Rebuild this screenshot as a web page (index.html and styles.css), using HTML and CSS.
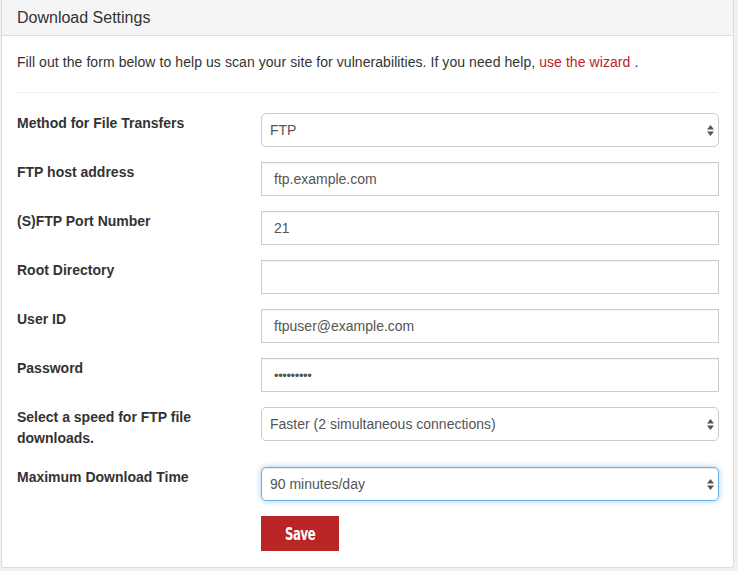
FILE: index.html
```html
<!DOCTYPE html>
<html>
<head>
<meta charset="utf-8">
<link rel="stylesheet" href="styles.css">
</head>
<body>
<div class="page">
  <div class="panel">
    <div class="panel-heading">Download Settings</div>
    <div class="panel-body">
      <p class="intro">Fill out the form below to help us scan your site for vulnerabilities. If you need help, <a href="#" class="link">use the wizard</a> .</p>
      <hr class="divider">
      <form class="form">
        <div class="row">
          <label class="label">Method for File Transfers</label>
          <div class="select-wrap">
            <select class="control select"><option>FTP</option></select>
            <svg class="arrows" width="7" height="11" viewBox="0 0 7 11"><path d="M3.5 0 L7 4.5 H0 Z M3.5 11 L7 6.5 H0 Z" fill="#555"/></svg>
          </div>
        </div>
        <div class="row">
          <label class="label">FTP host address</label>
          <input class="control input" type="text" value="ftp.example.com">
        </div>
        <div class="row">
          <label class="label">(S)FTP Port Number</label>
          <input class="control input" type="text" value="21">
        </div>
        <div class="row">
          <label class="label">Root Directory</label>
          <input class="control input" type="text" value="">
        </div>
        <div class="row">
          <label class="label">User ID</label>
          <input class="control input" type="text" value="ftpuser@example.com">
        </div>
        <div class="row">
          <label class="label">Password</label>
          <input class="control input password" type="password" value="password1">
        </div>
        <div class="row">
          <label class="label">Select a speed for FTP file downloads.</label>
          <div class="select-wrap">
            <select class="control select"><option>Faster (2 simultaneous connections)</option></select>
            <svg class="arrows" width="7" height="11" viewBox="0 0 7 11"><path d="M3.5 0 L7 4.5 H0 Z M3.5 11 L7 6.5 H0 Z" fill="#555"/></svg>
          </div>
        </div>
        <div class="row">
          <label class="label">Maximum Download Time</label>
          <div class="select-wrap">
            <select class="control select focused"><option>90 minutes/day</option></select>
            <svg class="arrows" width="7" height="11" viewBox="0 0 7 11"><path d="M3.5 0 L7 4.5 H0 Z M3.5 11 L7 6.5 H0 Z" fill="#555"/></svg>
          </div>
        </div>
        <div class="row last">
          <span></span>
          <div><button type="button" class="btn"><span class="btn-text">Save</span></button></div>
        </div>
      </form>
    </div>
  </div>
</div>
</body>
</html>
```

FILE: styles.css
```css
html, body {
  margin: 0;
  padding: 0;
  background: #f1f1f1;
  font-family: "Liberation Sans", Arial, Helvetica, sans-serif;
  color: #333;
}
.page {
  padding-left: 1px;
  width: 733px;
}
.panel {
  background: #fff;
  border: 1px solid #ddd;
  border-top: none;
  border-radius: 0 0 3px 3px;
}
.panel-heading {
  background: #f5f5f5;
  border-bottom: 1px solid #ddd;
  height: 36px;
  box-sizing: border-box;
  padding: 8px 15px 0;
  font-size: 16px;
  line-height: 20px;
  color: #333;
}
.panel-body {
  padding: 16px 14px 16px 15px;
}
.intro {
  margin: 0;
  font-size: 14px;
  line-height: 20px;
  letter-spacing: 0.07px;
}
.link {
  color: #b9232a;
  text-decoration: none;
}
.divider {
  border: 0;
  border-top: 1px solid #eee;
  margin: 20px 1px 20px 0;
}
.form {
  display: flex;
  flex-direction: column;
  gap: 15px;
}
.row {
  display: grid;
  grid-template-columns: 244px 1fr;
  align-items: start;
}
.label {
  font-weight: bold;
  font-size: 14px;
  line-height: 21px;
  padding-bottom: 3px;
  padding-right: 10px;
  color: #333;
}
.control {
  display: block;
  width: 100%;
  height: 34px;
  box-sizing: border-box;
  font-family: "Liberation Sans", Arial, Helvetica, sans-serif;
  font-size: 14px;
  color: #555;
  background: #fff;
  margin: 0;
  outline: none;
}
.input {
  border: 1px solid #ccc;
  border-radius: 0;
  padding: 6px 12px;
  box-shadow: inset 0 1px 1px rgba(0,0,0,0.04);
}
.password {
  font-size: 13px;
  letter-spacing: -0.4px;
}
.select-wrap {
  position: relative;
}
.select {
  -webkit-appearance: none;
  appearance: none;
  border: 1px solid #ccc;
  border-radius: 5px;
  padding: 6px 8px;
}
.select.focused {
  border-color: #66afe9;
  box-shadow: inset 0 1px 1px rgba(0,0,0,0.075), 0 0 6px rgba(102,175,233,0.6);
}
.arrows {
  position: absolute;
  right: 5px;
  top: 12px;
  pointer-events: none;
}
.btn {
  width: 78px;
  height: 35px;
  border: none;
  border-radius: 0;
  background: #ba2525;
  color: #fff;
  padding: 0;
  margin: 0;
  cursor: pointer;
}
.btn-text {
  display: inline-block;
  font-family: "DejaVu Sans Condensed", "DejaVu Sans", sans-serif;
  font-weight: bold;
  font-size: 18px;
  transform: scaleX(0.72);
  letter-spacing: -0.5px;
}
```
